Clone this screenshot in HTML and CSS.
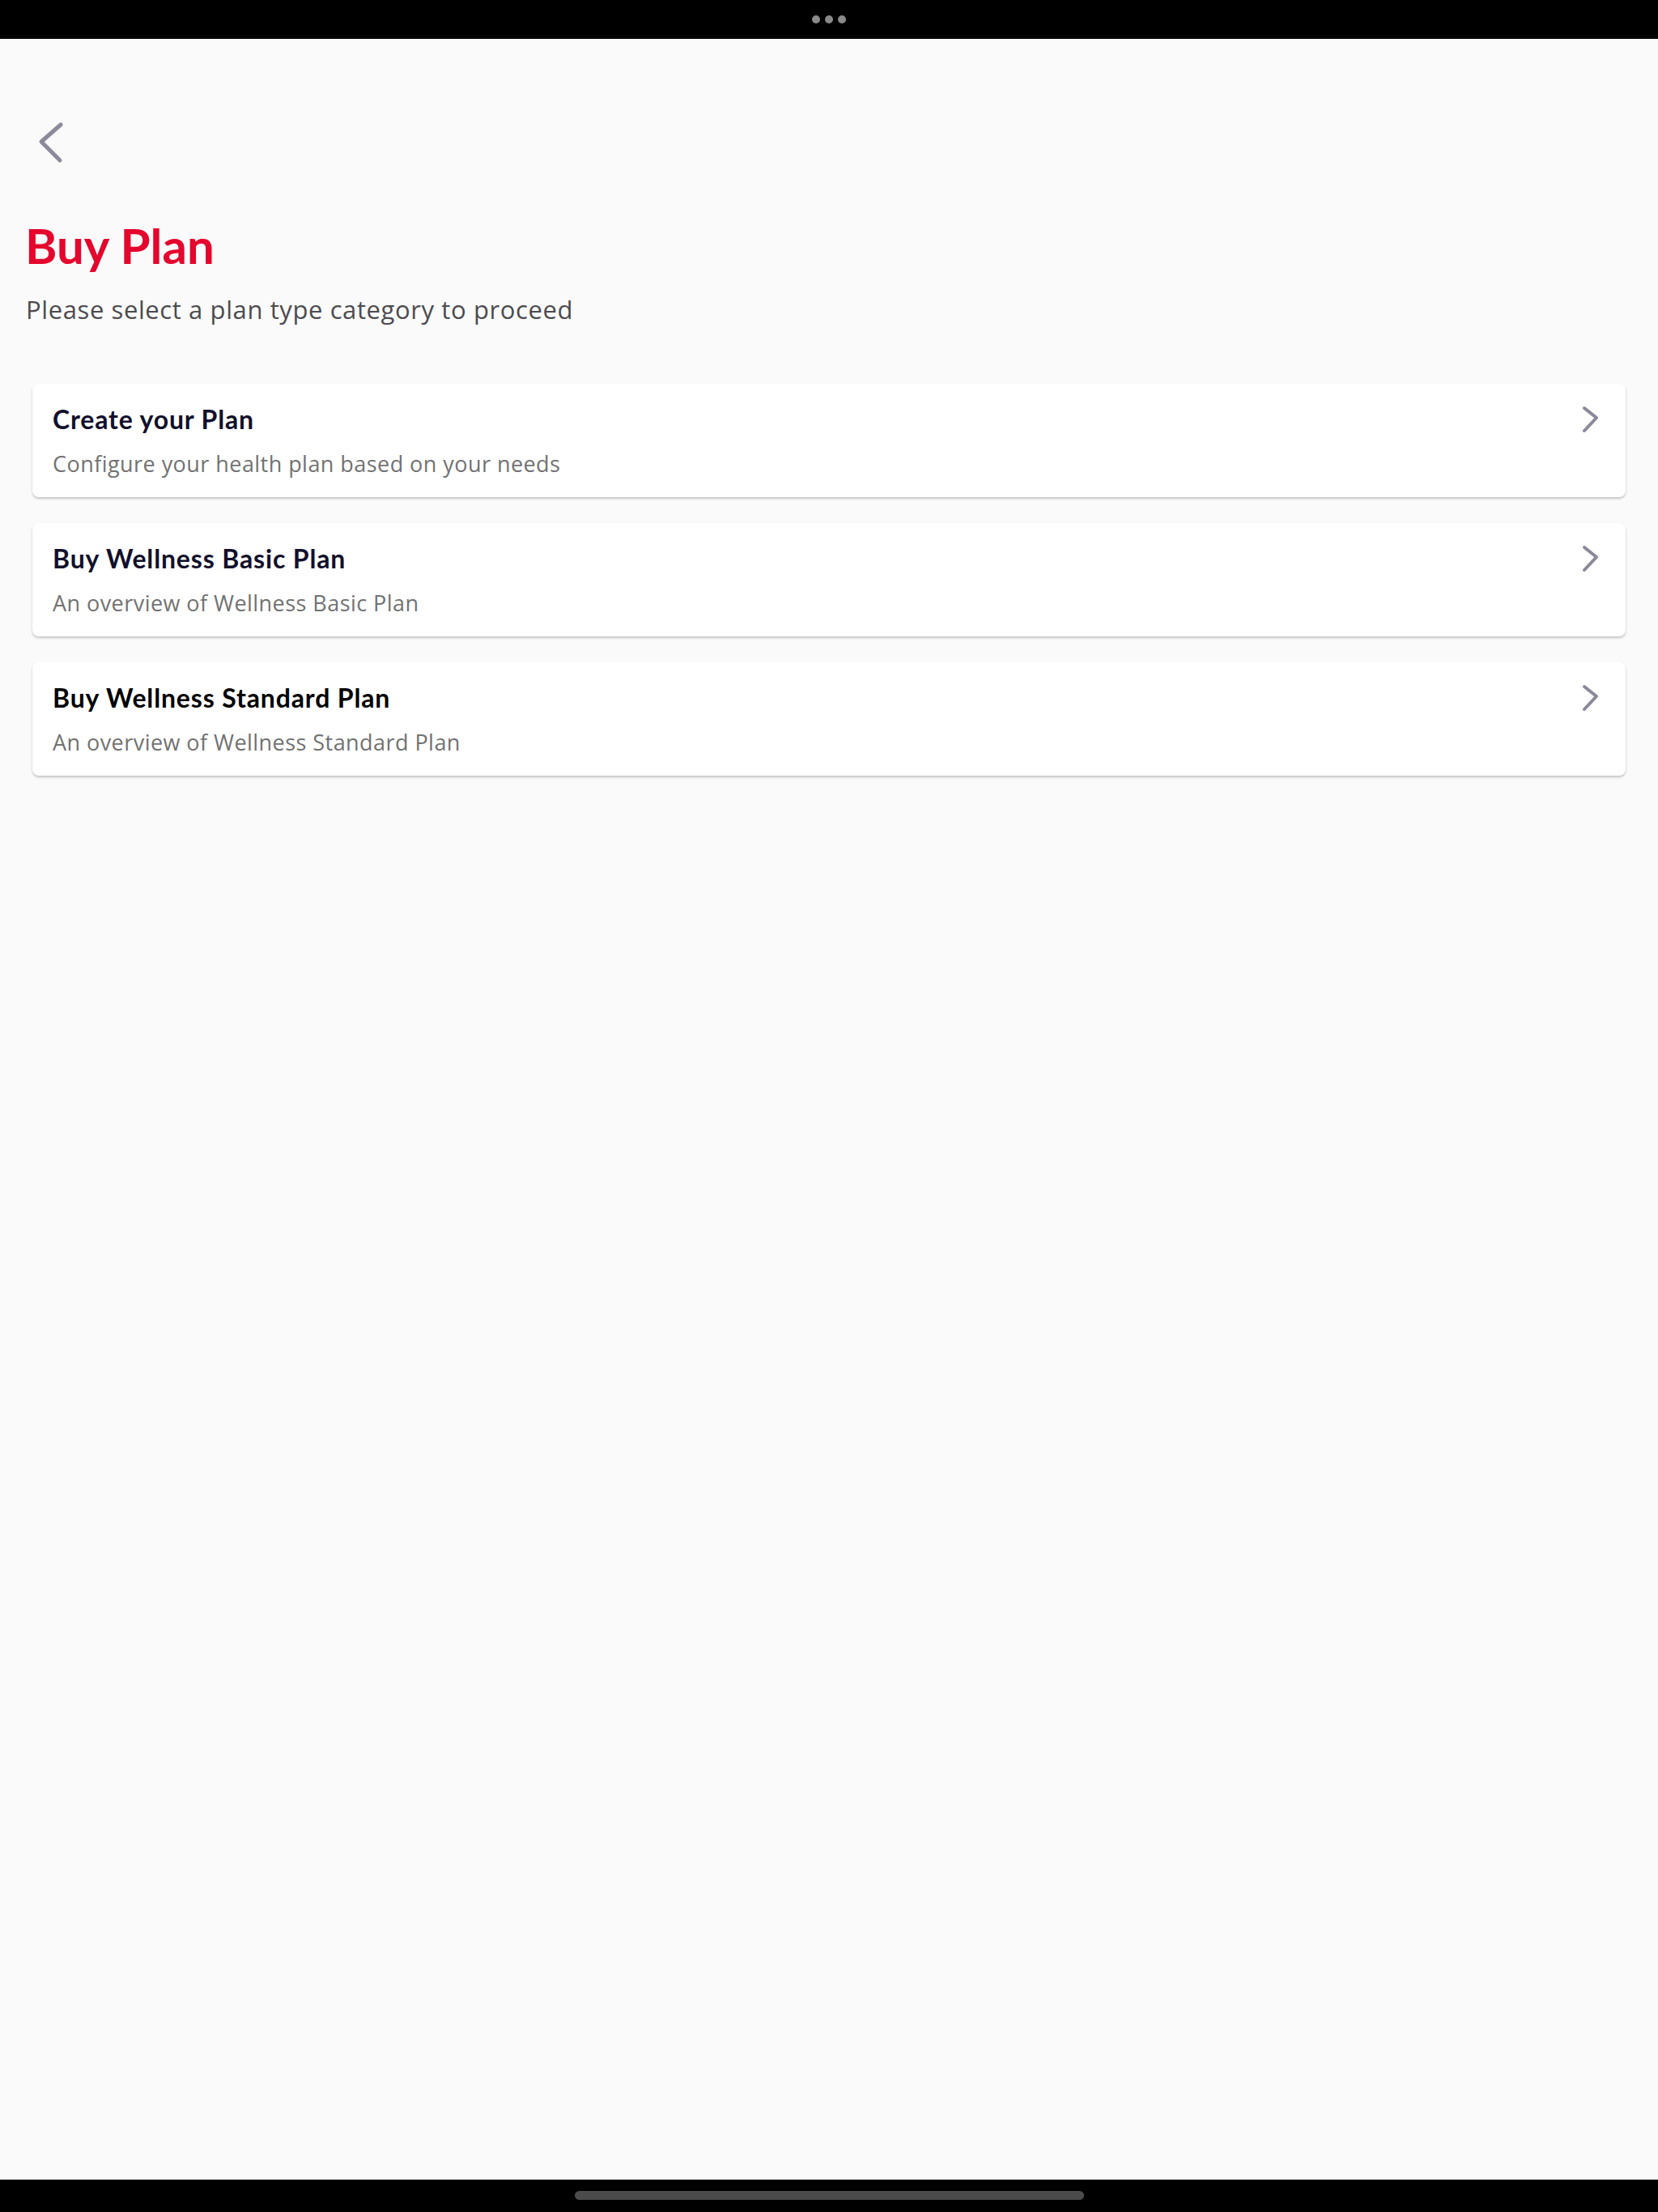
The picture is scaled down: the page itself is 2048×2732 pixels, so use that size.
FILE: index.html
```html
<!DOCTYPE html>
<html lang="en">
<head>
<meta charset="utf-8">
<title>Buy Plan</title>
<link rel="stylesheet" href="styles.css">
</head>
<body>
<div class="statusbar">
  <span class="dot"></span><span class="dot"></span><span class="dot"></span>
</div>
<main class="page">
  <div class="header">
    <svg class="back" width="60" height="70" viewBox="0 0 60 70" aria-label="Back">
      <polyline points="45,14 21,35 44,58" fill="none" stroke="#8c8a9a" stroke-width="5" stroke-linecap="round" stroke-linejoin="round"/>
    </svg>
  </div>
  <h1 class="title">Buy Plan</h1>
  <p class="subtitle">Please select a plan type category to proceed</p>
  <div class="cards">
    <div class="card">
      <div class="card-text">
        <div class="card-title">Create your Plan</div>
        <div class="card-desc">Configure your health plan based on your needs</div>
      </div>
      <svg class="chev" width="30" height="40" viewBox="0 0 30 40"><polyline points="7,6 22,18 7,34" fill="none" stroke="#8a8899" stroke-width="4" stroke-linecap="round" stroke-linejoin="round"/></svg>
    </div>
    <div class="card">
      <div class="card-text">
        <div class="card-title">Buy Wellness Basic Plan</div>
        <div class="card-desc">An overview of Wellness Basic Plan</div>
      </div>
      <svg class="chev" width="30" height="40" viewBox="0 0 30 40"><polyline points="7,6 22,18 7,34" fill="none" stroke="#8a8899" stroke-width="4" stroke-linecap="round" stroke-linejoin="round"/></svg>
    </div>
    <div class="card">
      <div class="card-text">
        <div class="card-title dark">Buy Wellness Standard Plan</div>
        <div class="card-desc">An overview of Wellness Standard Plan</div>
      </div>
      <svg class="chev" width="30" height="40" viewBox="0 0 30 40"><polyline points="7,6 22,18 7,34" fill="none" stroke="#8a8899" stroke-width="4" stroke-linecap="round" stroke-linejoin="round"/></svg>
    </div>
  </div>
</main>
<div class="navbar"><span class="home"></span></div>
</body>
</html>
```
FILE: styles.css
```css
* { box-sizing: border-box; }
html, body { margin: 0; padding: 0; }
body {
  background: #fafafa;
  font-family: Lato, "Noto Sans", "Liberation Sans", sans-serif;
  min-height: 2732px;
  display: flex;
  flex-direction: column;
}
.statusbar {
  height: 48px;
  background: #000;
  display: flex;
  justify-content: center;
  align-items: center;
  gap: 6px;
}
.dot {
  width: 10px;
  height: 10px;
  border-radius: 50%;
  background: #8a8a8a;
}
.page {
  flex: 1;
  padding: 0 40px;
}
.header {
  padding-top: 92px;
  margin-left: -10px;
  height: 162px;
}
.back { display: block; }
.title {
  margin: 57px 0 0 -9px;
  font-size: 60px;
  line-height: 72px;
  font-weight: 700;
  color: #e4062d;
}
.subtitle {
  margin: 23px 0 0 -8px;
  font-family: "Open Sans", Lato, sans-serif;
  font-size: 31px;
  line-height: 40px;
  letter-spacing: 0.6px;
  color: #4d4b4f;
}
.cards {
  margin-top: 72px;
  display: flex;
  flex-direction: column;
  gap: 32px;
}
.card {
  height: 140px;
  background: #fff;
  border-radius: 8px;
  box-shadow: 0 2px 3px rgba(0,0,0,0.22);
  display: flex;
  justify-content: space-between;
  align-items: flex-start;
  padding: 24px 28px 0 25px;
}
.card-title {
  font-size: 32px;
  line-height: 40px;
  font-weight: 700;
  letter-spacing: 0.85px;
  color: #12102b;
}
.card-title.dark { color: #000; }
.card-desc {
  margin-top: 18px;
  font-family: "Open Sans", Lato, sans-serif;
  font-size: 27px;
  line-height: 34px;
  letter-spacing: 0.45px;
  color: #727272;
}
.chev { display: block; margin-top: 0; }
.navbar {
  height: 40px;
  background: #000;
  display: flex;
  justify-content: center;
  padding-top: 14px;
}
.home {
  width: 629px;
  height: 11px;
  border-radius: 6px;
  background: #4b4b4b;
}
```
